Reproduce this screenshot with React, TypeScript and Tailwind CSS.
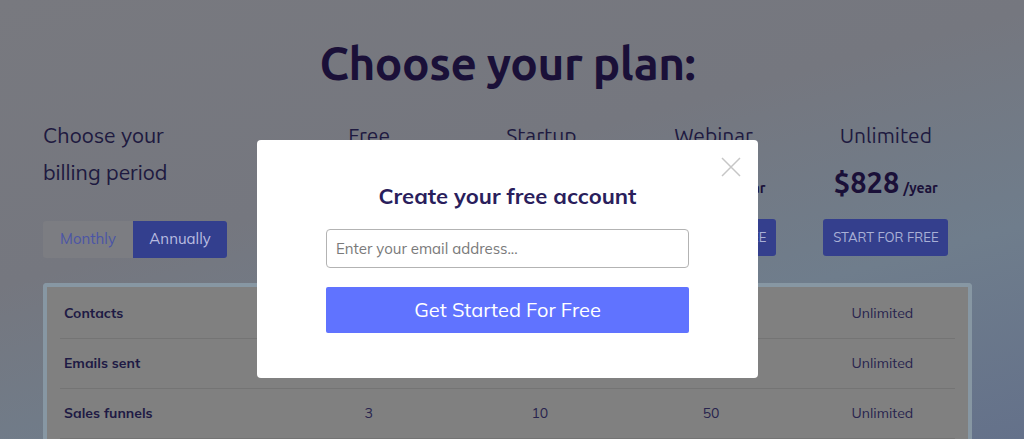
const plans = [
  { name: "Free", price: "$0", per: "/year" },
  { name: "Startup", price: "$228", per: "/year" },
  { name: "Webinar", price: "$468", per: "/year" },
  { name: "Unlimited", price: "$828", per: "/year" },
];

const rows = [
  { label: "Contacts", values: ["1,000", "10,000", "25,000", "Unlimited"] },
  { label: "Emails sent", values: ["15,000", "Unlimited", "Unlimited", "Unlimited"] },
  { label: "Sales funnels", values: ["3", "10", "50", "Unlimited"] },
];

const heading = { fontFamily: "Ubuntu, 'Open Sans', 'DejaVu Sans', sans-serif" };
const body = { fontFamily: "Mulish, Lato, 'Noto Sans', sans-serif" };

export default function App() {
  return (
    <div className="relative h-[439px] w-[1024px] overflow-hidden bg-[linear-gradient(165deg,#78797f_0%,#75777f_40%,#6f7d8c_70%,#64718a_100%)]">
      <div className="ml-[43px] w-[929px] pt-[35px]">
        <h1
          style={heading}
          className="text-center text-[46px] font-bold leading-[56px] tracking-[-0.5px] text-[#1a1038]"
        >
          Choose your plan:
        </h1>

        <div className="mt-[26px] grid grid-cols-[240px_1fr_1fr_1fr_1fr]">
          <div style={body}>
            <p className="text-[21px] leading-[37px] text-[#1e1a40]">
              Choose your
              <br />
              billing period
            </p>
            <div className="mt-[30px] flex h-[37px] w-[184px] overflow-hidden rounded-[3px] text-[15px]">
              <div className="flex w-[90px] items-center justify-center bg-[#7c7d82] text-[#4b55a6]">
                Monthly
              </div>
              <div className="flex flex-1 items-center justify-center bg-[#333f8e] text-[#b9bce0]">
                Annually
              </div>
            </div>
          </div>
          {plans.map((p) => (
            <div key={p.name} className="flex flex-col items-center">
              <div style={heading} className="text-[21px] leading-[37px] text-[#1e1a40]">
                {p.name}
              </div>
              <div style={heading} className="mt-[8px] flex items-baseline gap-[4px] text-[#1a1038]">
                <span className="text-[29px] font-bold leading-[40px]">{p.price}</span>
                <span className="text-[14px] font-bold">{p.per}</span>
              </div>
              <div
                style={body}
                className="mt-[17px] flex h-[37px] w-[125px] items-center justify-center rounded-[3px] bg-[#343f8d] text-[13px] text-[#a9b0d6]"
              >
                START FOR FREE
              </div>
            </div>
          ))}
        </div>

        <div
          className="mt-[25px] rounded-t-[4px] border-[4px] border-b-0 border-[#8797a3] bg-[#808080] pt-[2px]"
          style={body}
        >
          {rows.map((r) => (
            <div key={r.label}>
              <div className="grid h-[49px] grid-cols-[236px_1fr_1fr_1fr_1fr] items-center">
                <div className="pl-[17px] text-[14px] font-bold text-[#1e1a44]">{r.label}</div>
                {r.values.map((v, j) => (
                  <div key={j} className="text-center text-[14px] text-[#28244e]">
                    {v}
                  </div>
                ))}
              </div>
              <div className="mx-[13px] h-px bg-[#747474]" />
            </div>
          ))}
        </div>
      </div>

      <div
        style={body}
        className="absolute left-[257px] top-[140px] flex h-[238px] w-[501px] flex-col items-center rounded-[4px] bg-white pt-[42px]"
      >
        <button className="absolute right-[17px] top-[17px]">
          <svg width="20" height="20" viewBox="0 0 20 20" fill="none" stroke="#c6c6c6" strokeWidth="1.5">
            <path d="M1 1L19 19M19 1L1 19" />
          </svg>
        </button>
        <h2 className="text-[22px] font-bold leading-[28px] text-[#2a1e5c]">
          Create your free account
        </h2>
        <input
          placeholder="Enter your email address..."
          className="mt-[19px] h-[39px] w-[363px] rounded-[4px] border border-[#b3b3b3] px-[9px] text-[15px] text-[#333] placeholder:text-[#7a7a7a] focus:outline-none"
        />
        <button className="mt-[19px] h-[46px] w-[363px] rounded-[2px] bg-[#6073ff] text-[20px] text-white">
          Get Started For Free
        </button>
      </div>
    </div>
  );
}
